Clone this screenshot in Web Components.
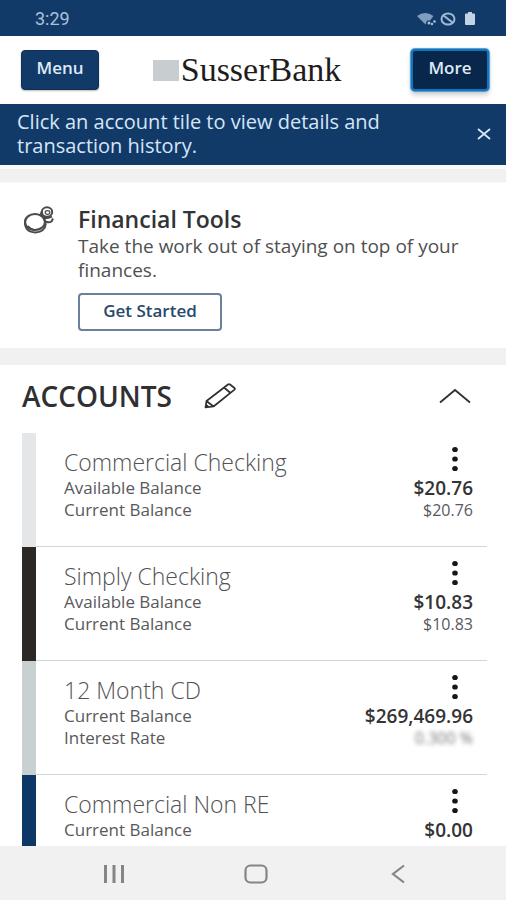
<!DOCTYPE html>
<html lang="en">
<head>
<meta charset="utf-8">
<meta name="viewport" content="width=device-width, initial-scale=1">
<title>SusserBank</title>
<style>
html, body { margin: 0; height: 100%; }
body { font-family: "Open Sans", "Noto Sans", sans-serif; color: #3c3c3e; background: #fff; --navy: #123a69; --grey: #f1f1f1; }
</style>
</head>
<body>
<bank-app></bank-app>
<script>
const define = (name, html, setup) => customElements.define(name, class extends HTMLElement {
  constructor() {
    super();
    const root = this.attachShadow({ mode: 'open' });
    const t = document.createElement('template');
    t.innerHTML = '<style>*{box-sizing:border-box}button{font:inherit;cursor:pointer}svg{display:block}</style>' + html;
    root.append(t.content.cloneNode(true));
  }
  connectedCallback() { if (setup) setup(this, this.shadowRoot); }
});

define('status-bar', `
<style>
:host { display: flex; align-items: center; justify-content: space-between; flex: none; height: 36px; padding: 2px 29px 0 35px; background: var(--navy); color: #a9c1dc; font: 400 18px/20px Roboto, sans-serif; }
.icons { display: flex; align-items: center; gap: 4px; }
</style>
<span>3:29</span>
<div class="icons">
  <svg width="19" height="14" viewBox="0 0 19 14"><path d="M0 4Q8 -2 16.500 4L13 8.500 10 8.500 8.500 12.500Z" fill="#7e9dbf"/><circle cx="12" cy="11" r="1.500" fill="#a9c1dc"/><circle cx="15" cy="12" r="1.200" fill="#a9c1dc"/><circle cx="17.500" cy="9.500" r="1.300" fill="#a9c1dc"/></svg>
  <svg width="16" height="14" viewBox="0 0 16 14" fill="none" stroke="#9fb9d6" stroke-width="2"><ellipse cx="8" cy="7" rx="6.500" ry="5.500"/><path d="M3.500 3.500l9 7"/></svg>
  <svg width="17" height="14" viewBox="0 0 17 14"><path d="M5 2.500q0-1 1-1h2V0h4v1.500h2q1 0 1 1V12q0 1-1 1H6q-1 0-1-1z" fill="#c3d3e6"/></svg>
</div>`);

define('bank-logo', `
<style>
:host { display: flex; align-items: center; gap: 2px; padding-right: 16px; color: #1f1d1c; font: 34px/40px "Liberation Serif", serif; }
i { width: 26px; height: 21px; background: #c8cecf; }
</style>
<i></i><span>SusserBank</span>`);

define('nav-button', `
<style>
:host { display: block; flex: none; }
button { display: block; width: 78px; height: 40px; padding: 0 0 4px; border: 1px solid #0e3058; border-radius: 4px; background: var(--navy); color: #dfeaf6; font-weight: 600; font-size: 17px; line-height: 20px; box-shadow: 0 1px 2px #0004; }
:host([active]) button { height: 42px; background: #09274b; border: 2px solid #1874b8; box-shadow: 0 0 1px 1px #3d9bdc, 0 4px 5px #0003; }
</style>
<button type="button"><slot></slot></button>`);

define('bank-header', `
<style>
:host { display: flex; align-items: center; justify-content: space-between; flex: none; height: 68px; padding: 0 17px 0 21px; background: #fff; }
</style>
<nav-button>Menu</nav-button><bank-logo></bank-logo><nav-button active>More</nav-button>`);

define('info-banner', `
<style>
:host { display: flex; align-items: center; justify-content: space-between; flex: none; padding: 6px 12px 7px 17px; background: var(--navy); color: #d5e6f7; font-size: 20px; line-height: 24px; }
p { margin: 0; max-width: 400px; }
button { width: 20px; height: 20px; padding: 3px; border: 0; background: none; color: inherit; }
</style>
<p><slot></slot></p>
<button type="button" aria-label="Close"><svg width="14" height="14" viewBox="0 0 14 14" stroke="currentColor" stroke-width="1.800"><path d="M1 2l12 10M13 2L1 12"/></svg></button>`);

define('tools-card', `
<style>
:host { display: grid; flex: none; grid-template-columns: 32px 1fr; gap: 24px; padding: 23px 22px 17px; background: #fff; border-top: 1px solid #fafafa; }
h2 { margin: 0 0 2px; font-size: 23px; line-height: 26px; font-weight: 600; color: #333335; }
p { margin: 0; font-size: 19px; line-height: 24px; color: #505052; }
button { display: block; margin-top: 11px; width: 144px; height: 38px; padding: 0 0 2px; border: 2px solid #6c7f9c; border-radius: 4px; background: #fff; color: #29496b; font-weight: 600; font-size: 17px; line-height: 20px; }
</style>
<svg width="32" height="30" viewBox="0 0 32 30" fill="none" stroke="#4a4a4c" stroke-width="2">
  <ellipse cx="13" cy="16" rx="10" ry="8" stroke-width="2.200"/>
  <path d="M3 17q0 9 10.500 9.500Q23 26 24 17.500" stroke-width="1.800"/>
  <path d="M6 20q3 4 8 4" stroke-width="1.500"/>
  <ellipse cx="25" cy="6" rx="5.200" ry="4.700"/><ellipse cx="25.500" cy="6.500" rx="2.300" ry="1.800" stroke-width="1.200"/>
  <path d="M19 8.500l4 5M20 5l-2 5M22 11.500q4 1.500 8-1M23.500 15.500q3.500 1.500 6 0l1.500-3"/>
</svg>
<div><h2>Financial Tools</h2><p>Take the work out of staying on top of your finances.</p><button type="button">Get Started</button></div>`);

define('account-tile', `
<style>
:host { display: grid; grid-template-columns: 14px 1fr; height: 114px; }
.body { display: grid; grid-template-columns: 1fr auto; grid-template-rows: 32px 22px 22px; padding: 12px 14px 0 28px; border-bottom: 1px solid #d3d5d6; font-size: 17px; line-height: 22px; color: #59595b; }
h3 { margin: 0; padding-bottom: 2px; align-self: end; font-size: 23px; line-height: 26px; font-weight: 300; color: #525254; }
button { justify-self: end; width: 36px; height: 28px; padding: 0; border: 0; background: none; }
svg { margin: 0 auto; }
.v1, .v2 { text-align: right; }
.v1 { font-size: 19px; font-weight: 600; color: #343436; }
.v2 { font-size: 16px; }
:host([masked]) .v2 { filter: blur(2px); color: #777; }
</style>
<div class="strip"></div>
<div class="body">
  <h3></h3>
  <button type="button" aria-label="Account options"><svg width="8" height="26" viewBox="0 0 8 26" fill="#161616"><ellipse cx="4" cy="3.500" rx="2.800" ry="2.600"/><ellipse cx="4" cy="13" rx="2.800" ry="2.600"/><ellipse cx="4" cy="22.500" rx="2.800" ry="2.600"/></svg></button>
  <span class="l1"></span><span class="v1"></span>
  <span class="l2"></span><span class="v2"></span>
</div>`, (el, root) => {
  root.querySelector('h3').textContent = el.getAttribute('name');
  for (const k of ['l1', 'v1', 'l2', 'v2']) root.querySelector('.' + k).textContent = el.getAttribute(k) || '';
  root.querySelector('.strip').style.background = el.getAttribute('tint');
});

define('accounts-panel', `
<style>
:host { display: block; padding: 0 19px 0 22px; background: #fff; }
header { display: flex; align-items: center; height: 68px; padding: 0 16px 6px 0; }
h2 { margin: 0 32px 0 0; font-size: 28px; line-height: 32px; font-weight: 600; color: #303032; }
button { padding: 0; border: 0; background: none; color: #303032; }
.toggle { margin-left: auto; }
</style>
<header>
  <h2>ACCOUNTS</h2>
  <button type="button" aria-label="Edit accounts"><svg width="32" height="28" viewBox="0 0 32 28" fill="none" stroke="currentColor" stroke-width="1.700" stroke-linejoin="round"><path d="M2.500 19L24 2.500q1-.8 2 0l4.500 3.500q.8.800 0 1.600L9.500 24.500l-8 .8zM2.500 19l7 5.500M20 5.500l6.500 5.500M1.500 22l3 3"/></svg></button>
  <button class="toggle" type="button" aria-label="Collapse accounts"><svg width="32" height="16" viewBox="0 0 32 16" fill="none" stroke="currentColor" stroke-width="1.800"><path d="M1 14.500L16 2l15 12.500"/></svg></button>
</header>
<slot></slot>`);

define('system-nav', `
<style>
:host { display: flex; align-items: center; justify-content: space-between; flex: none; height: 54px; padding: 2px 92px 0 98px; background: var(--grey); color: #858585; }
button { display: grid; place-items: center; width: 32px; height: 32px; padding: 0; border: 0; background: none; color: inherit; }
</style>
<button type="button" aria-label="Recent apps"><svg width="24" height="20" viewBox="0 0 24 20" fill="currentColor"><path d="M2 1h3v18H2zM10.500 1h3v18h-3zM19 1h3v18h-3z"/></svg></button>
<button type="button" aria-label="Home"><svg width="24" height="20" viewBox="0 0 24 20" fill="none" stroke="currentColor" stroke-width="2.200"><rect x="1.500" y="1.500" width="21" height="17" rx="5"/></svg></button>
<button type="button" aria-label="Back"><svg width="14" height="20" viewBox="0 0 14 20" fill="none" stroke="currentColor" stroke-width="2.200"><path d="M13 1.500L2 10l11 8.500"/></svg></button>`);

define('bank-app', `
<style>
:host { display: flex; flex-direction: column; height: 100vh; overflow: hidden; }
main { flex: 1; min-height: 0; overflow: hidden; display: flex; flex-direction: column; }
.band { flex: none; background: var(--grey); height: 17px; }
.first { border-top: 4px solid #f9fafa; }
accounts-panel { flex: none; }
</style>
<status-bar></status-bar>
<bank-header></bank-header>
<main>
  <info-banner>Click an account tile to view details and transaction history.</info-banner>
  <div class="band first"></div>
  <tools-card></tools-card>
  <div class="band"></div>
  <accounts-panel>
    <account-tile tint="#e4e6e7" name="Commercial Checking" l1="Available Balance" v1="$20.76" l2="Current Balance" v2="$20.76"></account-tile>
    <account-tile tint="#2b2825" name="Simply Checking" l1="Available Balance" v1="$10.83" l2="Current Balance" v2="$10.83"></account-tile>
    <account-tile tint="#c9d0d1" name="12 Month CD" l1="Current Balance" v1="$269,469.96" l2="Interest Rate" v2="0.300 %" masked></account-tile>
    <account-tile tint="#0d3866" name="Commercial Non RE" l1="Current Balance" v1="$0.00"></account-tile>
  </accounts-panel>
</main>
<system-nav></system-nav>`);
</script>
</body>
</html>
